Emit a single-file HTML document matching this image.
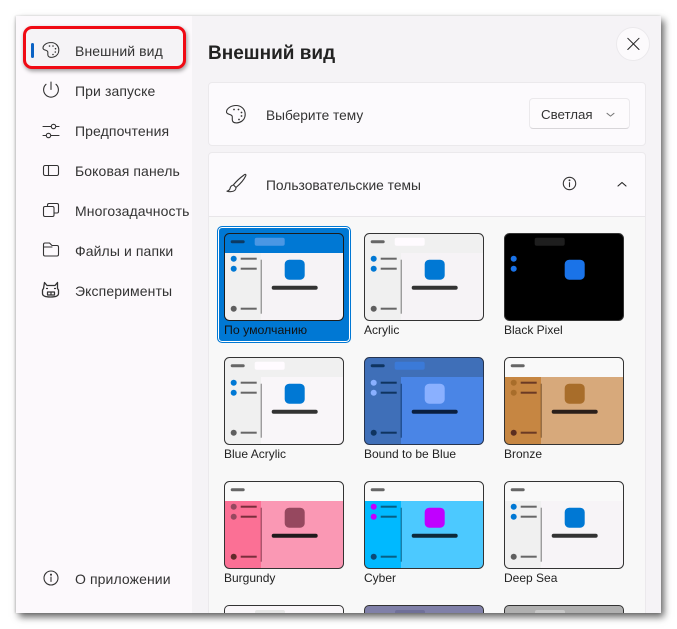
<!DOCTYPE html>
<html><head><meta charset="utf-8">
<style>
html,body{margin:0;padding:0;background:#fff;width:677px;height:629px;overflow:hidden;font-family:"Liberation Sans","DejaVu Sans",sans-serif;color:#2b2b2b}
.win{position:absolute;left:16px;top:16px;width:645px;height:597px;background:#f5f3f6;box-shadow:3px 4px 7px rgba(0,0,0,.6),-1px 0 2px rgba(0,0,0,.15)}
.clip{position:absolute;left:0;top:0;width:661px;height:613px;overflow:hidden}
.abs{position:absolute}
.side{position:absolute;left:16px;top:16px;width:176px;height:597px;background:#fcf9fc}
.t{position:absolute;white-space:nowrap;line-height:18px;font-size:14px;letter-spacing:.1px;color:#333}
.l{position:absolute;white-space:nowrap;line-height:16px;font-size:12px;color:#222}
.card{position:absolute;left:208px;width:436px;background:#fcfafd;border:1px solid #ebe9ec;border-radius:4px}
svg{position:absolute;overflow:visible}
.ic{fill:none;stroke:#333;stroke-width:1.1;stroke-linecap:round;stroke-linejoin:round}
</style></head>
<body>
<svg width="0" height="0" style="position:absolute"><defs>
<symbol id="th" viewBox="0 0 120 88" width="120" height="88" overflow="visible">
<rect x=".5" y=".5" width="119" height="87" rx="5" fill="var(--m)"/>
<path d="M.5 20V5.500a5 5 0 0 1 5-5h109a5 5 0 0 1 5 5V20z" fill="var(--tb)"/>
<path d="M.5 20H37V87.500H5.500a5 5 0 0 1-5-5z" fill="var(--s)"/>
<rect x="6.700" y="7.200" width="14" height="3" rx="1.500" fill="var(--d)"/>
<rect x="30.700" y="4.700" width="30" height="8" rx="2" fill="var(--p)"/>
<circle cx="9.700" cy="25.700" r="3" fill="var(--o)"/>
<circle cx="9.700" cy="35.700" r="3" fill="var(--o)"/>
<circle cx="9.700" cy="75.700" r="3" fill="var(--b)"/>
<rect x="16.700" y="24.700" width="16" height="2" fill="var(--li)"/>
<rect x="16.700" y="34.700" width="16" height="2" fill="var(--li)"/>
<rect x="16.700" y="74.700" width="16" height="2" fill="var(--li)"/>
<rect x="36.700" y="26.700" width="1" height="54" fill="var(--dv)"/>
<rect x="60.700" y="26.700" width="20" height="20" rx="4.500" fill="var(--o2)"/>
<rect x="47.700" y="52.700" width="46" height="4" rx="2" fill="var(--lg)"/>
<rect x=".5" y=".5" width="119" height="87" rx="5" fill="none" stroke="var(--bd)"/>
</symbol>
</defs></svg>

<div class="win"></div>
<div class="clip">
<div class="side"></div>

<!-- sidebar selected + red frame -->
<div class="abs" style="left:23px;top:26px;width:157px;height:37px;background:#f5f3f6;border:3.500px solid #f00a14;border-radius:9px;box-shadow:1px 2px 4px rgba(0,0,0,.4)"></div>
<div class="abs" style="left:31px;top:43px;width:3px;height:15px;background:#0a62c4;border-radius:2px"></div>

<svg class="ic" style="left:0;top:0" width="677" height="629">
<!-- palette sidebar -->
<path d="M51 42.500c-4.300 0-8 2.600-8 5.600 0 2.200 3.800 1.800 4.600 3.300.8 1.400-.4 2.900.6 4.600.9 1.500 3.500 1.700 5.800.9 3-1 4.800-3.700 4.800-6.700 0-4.400-3.300-7.700-7.800-7.700z"/>
<g fill="#333" stroke="none"><circle cx="49.500" cy="46" r=".8"/><circle cx="53" cy="46" r=".8"/><circle cx="55.500" cy="48.700" r=".8"/><circle cx="55.300" cy="52" r=".8"/><circle cx="53" cy="54.500" r=".8"/></g>
<!-- power -->
<path d="M46 84.300a7.400 7.400 0 1 0 10 0M51 82v7.500"/>
<!-- sliders -->
<path d="M43 126.500h8M56 126.500h3M43 135.500h3M51 135.500h8"/><circle cx="53.500" cy="126.500" r="2.200"/><circle cx="48.500" cy="135.500" r="2.200"/>
<!-- sidebar panel -->
<rect x="43.500" y="165.500" width="15" height="10" rx="1.600"/><path d="M48.500 165.500v10"/>
<!-- multitask -->
<path d="M47.500 206.500v-1.500a1.500 1.500 0 0 1 1.500-1.500h8a1.500 1.500 0 0 1 1.500 1.500v6.500a1.500 1.500 0 0 1-1.500 1.500h-3"/><rect x="43.500" y="206.500" width="10.500" height="10" rx="1.500"/>
<!-- folder -->
<path d="M43.500 244.500a1.500 1.500 0 0 1 1.500-1.500h4.500l2.500 2.500h5a1.500 1.500 0 0 1 1.500 1.500v7.500a1.500 1.500 0 0 1-1.500 1.500h-12a1.500 1.500 0 0 1-1.500-1.500zM43.500 247h8.500"/>
<!-- cat -->
<path d="M44.500 282.500l2.500 3h8l2.500-3v6l1 1.500v3.500c0 2-2.500 3.500-8 3.500s-8-1.500-8-3.500v-3.500l1-1.500z" stroke-width="1.300"/>
<path d="M47.500 292h7v3h-7zM46.500 288.500h1M54.500 288.500h1M51 292v3" stroke-width="1.200"/>
<!-- info sidebar -->
<circle cx="51" cy="578" r="7"/><path d="M51 577v4.500"/><circle cx="51" cy="574.700" r=".5" fill="#333"/>
</svg>

<div class="t" style="left:75px;top:42px">Внешний вид</div>
<div class="t" style="left:75px;top:82px">При запуске</div>
<div class="t" style="left:75px;top:122px">Предпочтения</div>
<div class="t" style="left:75px;top:162px">Боковая панель</div>
<div class="t" style="left:75px;top:202px">Многозадачность</div>
<div class="t" style="left:75px;top:242px">Файлы и папки</div>
<div class="t" style="left:75px;top:282px">Эксперименты</div>
<div class="t" style="left:75px;top:570px">О приложении</div>

<!-- main header -->
<div class="abs" style="left:208px;top:41px;font-size:19px;font-weight:bold;line-height:26px;color:#222;white-space:nowrap">Внешний вид</div>
<div class="abs" style="left:616px;top:27px;width:32px;height:32px;border-radius:50%;background:#fcfafc;border:1px solid #ebe9ec"></div>

<!-- card 1 -->
<div class="card" style="top:82px;height:62px"></div>
<div class="t" style="left:266px;top:107px;font-size:13.700px;letter-spacing:0">Выберите тему</div>
<div class="abs" style="left:529px;top:98px;width:99px;height:29px;background:#fdfbfd;border:1px solid #ebe9ec;border-bottom-color:#d8d6d9;border-radius:4px"></div>
<div class="t" style="left:541px;top:106px;font-size:13.300px;letter-spacing:0">Светлая</div>

<!-- card 2 -->
<div class="card" style="top:152px;height:500px"></div>
<div class="abs" style="left:209px;top:216px;width:436px;height:420px;background:#f8f8f8;border-top:1px solid #e8e6e9"></div>
<div class="t" style="left:266px;top:177px;font-size:13.800px;letter-spacing:0">Пользовательские темы</div>

<svg class="ic" style="left:0;top:0" width="677" height="629">
<path d="M627.800 38.300l11.200 11.200M639 38.300l-11.200 11.200" stroke="#222" stroke-width="1"/>
<path d="M236 105.500c-5 0-9.500 3-9.500 6.500 0 2.600 4.500 2 5.500 3.800 1 1.700-.5 3.500.7 5.500 1.100 1.800 4.200 2 6.800 1 3.600-1.200 5.700-4.300 5.700-7.900 0-5.200-3.900-8.900-9.200-8.900z"/>
<g fill="#333" stroke="none"><circle cx="234" cy="109.500" r=".9"/><circle cx="238.500" cy="109.500" r=".9"/><circle cx="241.500" cy="112.500" r=".9"/><circle cx="241.500" cy="116" r=".9"/><circle cx="239" cy="119.500" r=".9"/></g>
<path d="M607 113.300l3.500 2.800 3.500-2.800" stroke="#777" stroke-width="1"/>
<path d="M244 175c1.400-1.400 2.300-.5 1.700.9-1.600 3.500-6 8.500-9.700 11.600l-2.600-2.600c3-3.700 7.300-7.500 10.600-9.900zM233.400 185c-2.200.5-3 1.800-3.300 3.200-.3 1.300-1 2.300-3.100 3 2.500.8 6.300.6 7.800-.8 1-1 1.300-1.900 1.200-2.900"/>
<circle cx="569.500" cy="183.500" r="6.200"/><path d="M569.500 182.700v4"/><circle cx="569.500" cy="180.300" r=".4" fill="#333"/>
<path d="M618 186l4-3.500 4 3.500" stroke="#222" stroke-width="1.100"/>
</svg>

<!-- selected tile -->
<div class="abs" style="left:217px;top:226px;width:132px;height:115px;background:#0078d4;border:1px solid #0078d4;border-radius:5px;box-shadow:inset 0 0 0 1px #fff"></div>

<svg style="left:224px;top:233px" width="120" height="88"><use href="#th" style="--m:#f6f3f6;--tb:#0078d4;--s:#f0f0f0;--d:#0c3a63;--p:#4a97e4;--o:#0078d4;--b:#5f5f5f;--li:#666;--dv:#777;--o2:#0078d4;--lg:#333;--bd:#1c1c1c"/></svg>
<svg style="left:364px;top:233px" width="120" height="88"><use href="#th" style="--m:#f6f3f6;--tb:#f0f0f0;--s:#f0f0f0;--d:#666;--p:#fffbff;--o:#0078d4;--b:#5f5f5f;--li:#666;--dv:#777;--o2:#0078d4;--lg:#333;--bd:#333"/></svg>
<svg style="left:504px;top:233px" width="120" height="88"><use href="#th" style="--m:#000;--tb:#000;--s:#000;--d:#000;--p:#1e1e1e;--o:#1a73e8;--b:#000;--li:#000;--dv:#000;--o2:#1a73e8;--lg:#000;--bd:#333"/></svg>

<svg style="left:224px;top:357px" width="120" height="88"><use href="#th" style="--m:#f9f6f9;--tb:#f0f0f0;--s:#f0f0f0;--d:#666;--p:#fffbff;--o:#0078d4;--b:#5f5f5f;--li:#666;--dv:#777;--o2:#0078d4;--lg:#333;--bd:#333"/></svg>
<svg style="left:364px;top:357px" width="120" height="88"><use href="#th" style="--m:#4a85e6;--tb:#3f6fb8;--s:#3f6fb8;--d:#0f3460;--p:#3b7ad8;--o:#8ab0ff;--b:#0f3460;--li:#0f3460;--dv:#123a70;--o2:#8ab0ff;--lg:#0a1f40;--bd:#26344f"/></svg>
<svg style="left:504px;top:357px" width="120" height="88"><use href="#th" style="--m:#d7a97b;--tb:#f9f9f9;--s:#c68642;--d:#666;--p:#f9f9f9;--o:#a86d2a;--b:#5a2e20;--li:#6b3a24;--dv:#7a5530;--o2:#a86d2a;--lg:#2a1f1a;--bd:#333"/></svg>

<svg style="left:224px;top:481px" width="120" height="88"><use href="#th" style="--m:#fa98b4;--tb:#f9f9f9;--s:#fb7095;--d:#666;--p:#f9f9f9;--o:#96485f;--b:#602a2a;--li:#7a2e3c;--dv:#8a3a50;--o2:#96485f;--lg:#1f1a1c;--bd:#333"/></svg>
<svg style="left:364px;top:481px" width="120" height="88"><use href="#th" style="--m:#4cc9ff;--tb:#f9f9f9;--s:#00b9ff;--d:#666;--p:#f9f9f9;--o:#c000ff;--b:#0b4a78;--li:#075f84;--dv:#075f84;--o2:#c000ff;--lg:#0d2a3a;--bd:#333"/></svg>
<svg style="left:504px;top:481px" width="120" height="88"><use href="#th" style="--m:#f7f4f7;--tb:#f9f9f9;--s:#f0f0f0;--d:#666;--p:#f9f9f9;--o:#0078d4;--b:#5f5f5f;--li:#666;--dv:#777;--o2:#0078d4;--lg:#333;--bd:#333"/></svg>

<!-- row 4 clipped -->
<div class="abs" style="left:224px;top:605px;width:118px;height:20px;background:#f9f6f9;border:1px solid #333;border-radius:5px 5px 0 0"></div>
<div class="abs" style="left:255px;top:610px;width:30px;height:8px;background:#e6e6e6;border-radius:2px"></div>
<div class="abs" style="left:364px;top:605px;width:118px;height:20px;background:#8080a8;border:1px solid #333;border-radius:5px 5px 0 0"></div>
<div class="abs" style="left:395px;top:610px;width:30px;height:8px;background:#6f6f98;border-radius:2px"></div>
<div class="abs" style="left:504px;top:605px;width:118px;height:20px;background:#b0b0b0;border:1px solid #333;border-radius:5px 5px 0 0"></div>
<div class="abs" style="left:535px;top:610px;width:30px;height:8px;background:#c8c8c8;border-radius:2px"></div>

<!-- labels -->
<div class="l" style="left:224px;top:322px;color:#111;font-size:12.300px">По умолчанию</div>
<div class="l" style="left:364px;top:322px">Acrylic</div>
<div class="l" style="left:504px;top:322px">Black Pixel</div>
<div class="l" style="left:224px;top:446px">Blue Acrylic</div>
<div class="l" style="left:364px;top:446px">Bound to be Blue</div>
<div class="l" style="left:504px;top:446px">Bronze</div>
<div class="l" style="left:224px;top:570px">Burgundy</div>
<div class="l" style="left:364px;top:570px">Cyber</div>
<div class="l" style="left:504px;top:570px">Deep Sea</div>
</div>
</body></html>
